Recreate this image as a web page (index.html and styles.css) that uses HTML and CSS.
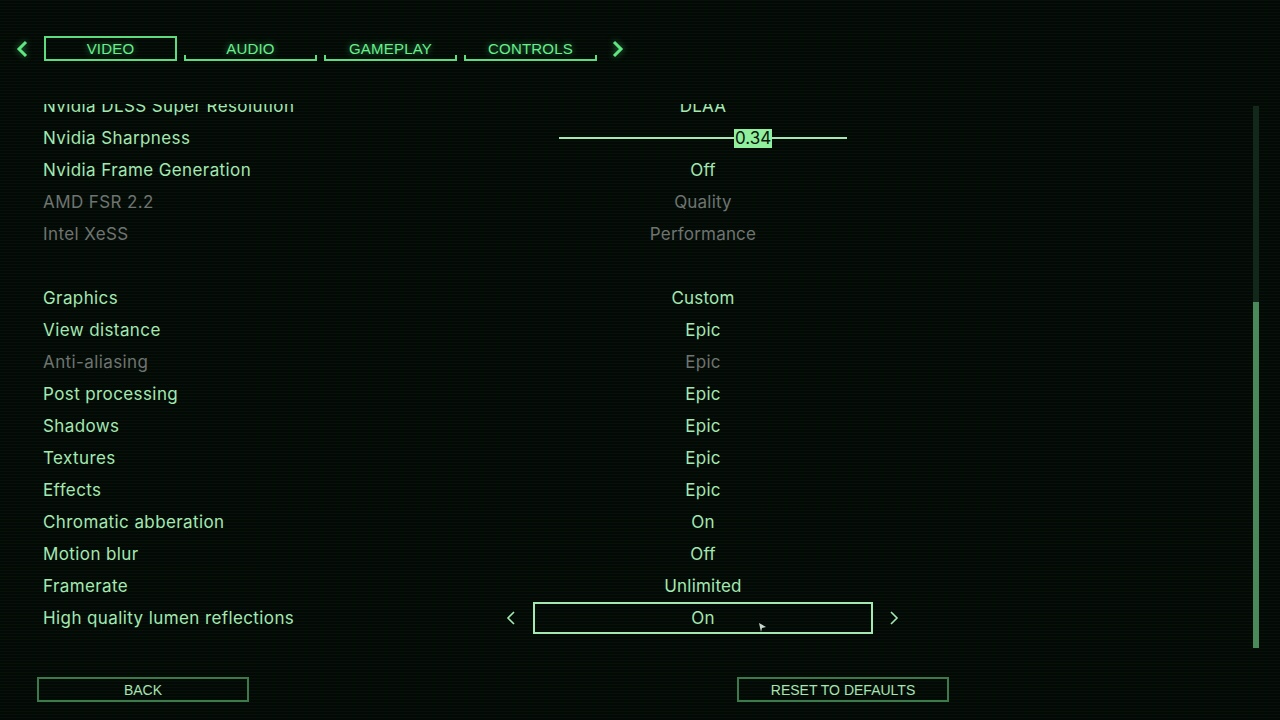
FILE: index.html
```html
<!DOCTYPE html>
<html lang="en">
<head>
    <meta charset="UTF-8">
    <meta name="viewport" content="width=device-width, initial-scale=1.0">
    <title>Settings - Video</title>
    <link rel="stylesheet" href="styles.css">
</head>
<body>
    <div class="screen">
        <!-- tab strip -->
        <nav class="tabs">
            <svg class="tab-arrow" width="14" height="18" viewBox="0 0 14 18">
                <polyline points="11,2 4,9 11,16" fill="none" stroke="#5fe882" stroke-width="3"/>
            </svg>
            <div class="tab active">VIDEO</div>
            <div class="tab">AUDIO</div>
            <div class="tab">GAMEPLAY</div>
            <div class="tab">CONTROLS</div>
            <svg class="tab-arrow" width="14" height="18" viewBox="0 0 14 18">
                <polyline points="3,2 10,9 3,16" fill="none" stroke="#5fe882" stroke-width="3"/>
            </svg>
        </nav>

        <!-- settings list -->
        <main class="panel">
            <div class="list-wrap">
                <div class="list">
                    <div class="row"><span class="label">Nvidia DLSS Super Resolution</span><span class="value">DLAA</span></div>
                    <div class="row">
                        <span class="label">Nvidia Sharpness</span>
                        <span class="value">
                            <span class="slider">
                                <span class="slider-line"></span>
                                <span class="slider-knob">0.34</span>
                                <span class="slider-line"></span>
                            </span>
                        </span>
                    </div>
                    <div class="row"><span class="label">Nvidia Frame Generation</span><span class="value">Off</span></div>
                    <div class="row disabled"><span class="label">AMD FSR 2.2</span><span class="value">Quality</span></div>
                    <div class="row disabled"><span class="label">Intel XeSS</span><span class="value">Performance</span></div>
                    <div class="row spacer"></div>
                    <div class="row"><span class="label">Graphics</span><span class="value">Custom</span></div>
                    <div class="row"><span class="label">View distance</span><span class="value">Epic</span></div>
                    <div class="row disabled"><span class="label">Anti-aliasing</span><span class="value">Epic</span></div>
                    <div class="row"><span class="label">Post processing</span><span class="value">Epic</span></div>
                    <div class="row"><span class="label">Shadows</span><span class="value">Epic</span></div>
                    <div class="row"><span class="label">Textures</span><span class="value">Epic</span></div>
                    <div class="row"><span class="label">Effects</span><span class="value">Epic</span></div>
                    <div class="row"><span class="label">Chromatic abberation</span><span class="value">On</span></div>
                    <div class="row"><span class="label">Motion blur</span><span class="value">Off</span></div>
                    <div class="row"><span class="label">Framerate</span><span class="value">Unlimited</span></div>
                    <div class="row selected">
                        <span class="label">High quality lumen reflections</span>
                        <span class="value">
                            <svg class="sel-arrow left" width="10" height="16" viewBox="0 0 10 16">
                                <polyline points="8,2 2,8 8,14" fill="none" stroke="#a4e8b2" stroke-width="1.6"/>
                            </svg>
                            <span class="sel-box">On</span>
                            <svg class="sel-arrow right" width="10" height="16" viewBox="0 0 10 16">
                                <polyline points="2,2 8,8 2,14" fill="none" stroke="#a4e8b2" stroke-width="1.6"/>
                            </svg>
                            <svg class="cursor" width="8" height="10" viewBox="0 0 8 10">
                                <polygon points="0,0 7,4 3,5 2,9" fill="#c8d8cc"/>
                            </svg>
                        </span>
                    </div>
                </div>
            </div>
            <div class="scrollbar">
                <div class="scroll-thumb"></div>
            </div>
        </main>

        <footer class="footer">
            <div class="btn">BACK</div>
            <div class="btn">RESET TO DEFAULTS</div>
        </footer>
    </div>
</body>
</html>
```

FILE: styles.css
```css
body {
    margin: 0;
    padding: 0;
    background: #030a05;
    overflow: hidden;
}

.screen {
    width: 1280px;
    height: 720px;
    position: relative;
    background-color: #030a05;
    /* CRT scanlines */
    background-image: repeating-linear-gradient(
        to bottom,
        rgba(120, 200, 140, 0.035) 0px,
        rgba(120, 200, 140, 0.035) 1px,
        rgba(0, 0, 0, 0) 1px,
        rgba(0, 0, 0, 0) 3px
    );
    font-family: Inter, 'Noto Sans', sans-serif;
    color: #a4e8b2;
    display: flex;
    flex-direction: column;
}

/* 頂部分頁 */
.tabs {
    display: flex;
    align-items: center;
    padding: 36px 0 0 15px;
    height: 25px;
}

.tab-arrow {
    filter: drop-shadow(0 0 3px rgba(95, 232, 130, 0.5));
}

.tab-arrow:first-child {
    margin-right: 15px;
}

.tab-arrow:last-child {
    margin-left: 14px;
}

.tab {
    position: relative;
    width: 133px;
    height: 25px;
    box-sizing: border-box;
    margin-right: 7px;
    display: flex;
    align-items: center;
    justify-content: center;
    font-family: 'Liberation Sans', Arial, sans-serif;
    font-size: 15px;
    letter-spacing: 0.2px;
    color: #66f08c;
    text-shadow: 0 0 6px rgba(98, 236, 136, 0.55);
    padding-bottom: 1px;
}

.tab:nth-last-of-type(1) {
    margin-right: 0;
}

.tab::after {
    content: '';
    position: absolute;
    left: 0;
    right: 0;
    bottom: 0;
    height: 6px;
    border: 2px solid #5cdc7e;
    border-top: none;
    box-sizing: border-box;
}

.tab.active {
    border: 2px solid #5cdc7e;
}

.tab.active::after {
    display: none;
}

/* 設定列表 */
.panel {
    display: flex;
    margin-top: 43px;
    height: 546px;
}

.list-wrap {
    flex: 1;
    overflow: hidden;
    padding-left: 43px;
}

.list {
    margin-top: -14px;
}

.row {
    display: flex;
    align-items: center;
    height: 32px;
    font-size: 17px;
}

.row .label {
    width: 490px;
    letter-spacing: 0.4px;
}

.row .value {
    position: relative;
    width: 340px;
    text-align: center;
    display: flex;
    justify-content: center;
    align-items: center;
    height: 32px;
    letter-spacing: 0.2px;
}

.row.disabled {
    color: #6e7470;
}

/* 滑桿 */
.slider {
    display: flex;
    align-items: center;
    width: 288px;
}

.slider-line {
    height: 2px;
    background: #a4e8b2;
}

.slider-line:first-child {
    width: 175px;
}

.slider-line:last-child {
    flex: 1;
}

.slider-knob {
    background: #90f09e;
    color: #0a160c;
    font-size: 17px;
    line-height: 19px;
    padding: 0 1px;
    letter-spacing: 0;
}

/* 目前選取的選項 */
.sel-box {
    width: 340px;
    height: 32px;
    box-sizing: border-box;
    border: 2px solid #a4e8b2;
    display: flex;
    align-items: center;
    justify-content: center;
}

.sel-arrow {
    position: absolute;
    top: 8px;
}

.sel-arrow.left {
    left: -27px;
}

.sel-arrow.right {
    right: -26px;
}

.cursor {
    position: absolute;
    left: 226px;
    top: 21px;
}

/* 捲軸 */
.scrollbar {
    width: 6px;
    margin-right: 21px;
    margin-top: 2px;
    margin-bottom: 2px;
    background: #11281a;
    display: flex;
    flex-direction: column;
    justify-content: flex-end;
}

.scroll-thumb {
    height: 346px;
    background: #4a8a5a;
}

/* 底部按鈕 */
.footer {
    display: flex;
    gap: 488px;
    padding-left: 37px;
    margin-top: 27px;
}

.btn {
    width: 212px;
    height: 25px;
    box-sizing: border-box;
    border: 2px solid #3c7a4c;
    display: flex;
    align-items: center;
    justify-content: center;
    font-family: 'Liberation Sans', Arial, sans-serif;
    font-size: 14px;
    color: #a8e4b2;
}
```
